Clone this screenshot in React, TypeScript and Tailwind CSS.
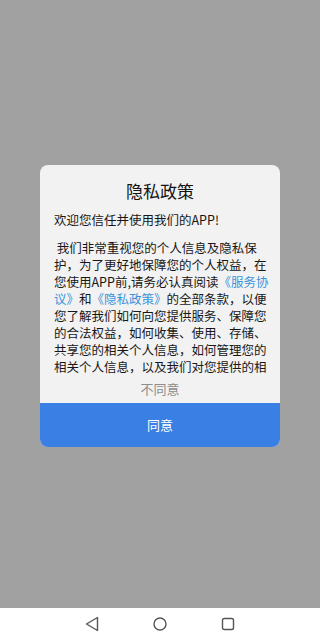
import React from 'react';

const font = { fontFamily: '"Noto Sans CJK SC", "Noto Sans", sans-serif' };

const Link: React.FC<{ children: React.ReactNode }> = ({ children }) => (
  <span className="text-[#3a94dc]">{children}</span>
);

const lines: React.ReactNode[] = [
  '\u00a0我们非常重视您的个人信息及隐私保',
  '护，为了更好地保障您的个人权益，在',
  <>您使用APP前,请务必认真阅读<Link>《服务协</Link></>,
  <><Link>议》</Link>和<Link>《隐私政策》</Link>的全部条款，以便</>,
  '您了解我们如何向您提供服务、保障您',
  '的合法权益，如何收集、使用、存储、',
  '共享您的相关个人信息，如何管理您的',
  '相关个人信息，以及我们对您提供的相',
];

const NavBar: React.FC = () => (
  <div className="h-[32px] bg-white flex items-center justify-center gap-[54px] text-[#555]">
    <svg width="14" height="16" viewBox="0 0 14 16" fill="none" stroke="currentColor" strokeWidth="1.4" strokeLinejoin="round">
      <path d="M12.5 1.5 L1.5 8 L12.5 14.5 Z" />
    </svg>
    <svg width="14" height="14" viewBox="0 0 14 14" fill="none" stroke="currentColor" strokeWidth="1.4">
      <circle cx="7" cy="7" r="6" />
    </svg>
    <svg width="14" height="14" viewBox="0 0 14 14" fill="none" stroke="currentColor" strokeWidth="1.4">
      <rect x="1.5" y="1.5" width="11" height="11" rx="1.8" />
    </svg>
  </div>
);

export default function App() {
  return (
    <div className="w-[320px] h-[640px] flex flex-col bg-[#a1a1a1]" style={font}>
      <div className="flex-1 pt-[165px] px-[40px]">
        <div className="bg-[#f2f2f2] rounded-[8px] overflow-hidden">
          <div className="pt-[14px] text-center text-[17px] leading-[24px] text-[#141414]">隐私政策</div>
          <div className="mt-[8px] pl-[14px] pr-[6px] text-[12.5px] leading-[17px] text-[#171717]">
            <div className="whitespace-nowrap">欢迎您信任并使用我们的APP!</div>
            <div className="mt-[11px] h-[136px] overflow-hidden">
              {lines.map((l, i) => (
                <div key={i} className="whitespace-nowrap">{l}</div>
              ))}
            </div>
          </div>
          <div className="h-[28px] flex items-center justify-center text-[13px] text-[#8c8c8c]">不同意</div>
          <div className="h-[44px] bg-[#3a7fe4] flex items-center justify-center text-[13px] text-white">同意</div>
        </div>
      </div>
      <NavBar />
    </div>
  );
}
